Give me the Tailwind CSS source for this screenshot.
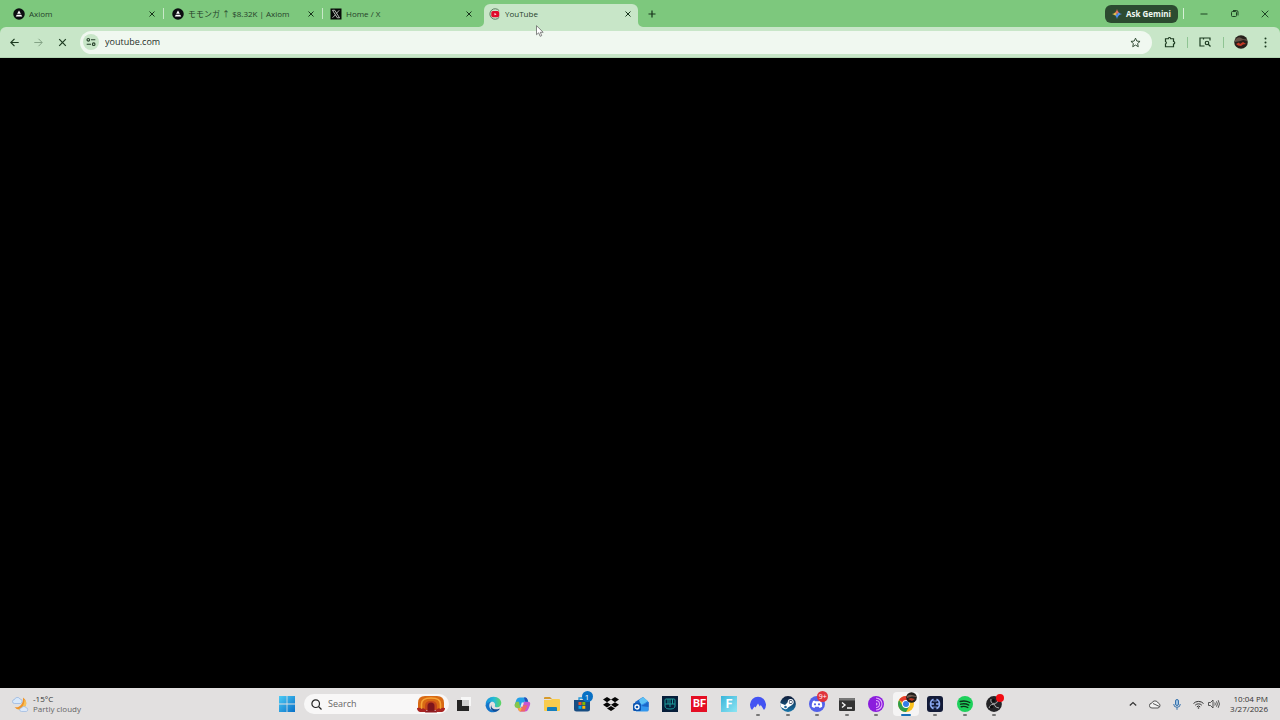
<!DOCTYPE html>
<html lang="en">
<head>
  <meta charset="UTF-8" />
  <meta name="viewport" content="width=device-width, initial-scale=1.0"/>
  <title>YouTube</title>
  <script src="https://cdn.jsdelivr.net/npm/@tailwindcss/browser@4"></script>
</head>
<body class="h-screen flex flex-col overflow-hidden bg-black text-[#26402a] font-['Open_Sans','Noto_Sans_CJK_JP',sans-serif]">

  <!-- Tab strip -->
  <header class="bg-[#7dc87d]">
    <div class="h-[27px] flex items-center">
      <nav class="h-full flex items-center pl-[7px]" aria-label="Tabs">
        <div class="w-[154px] flex items-center gap-1 pl-1.5 pr-[5px]">
          <svg class="size-3 shrink-0" viewBox="0 0 24 24"><circle cx="12" cy="12" r="11.500" fill="#0b0d10"/><path d="M12 5l3.700 6.500H8.300z" fill="#fff"/><path d="M7.500 13.500h9l2 3.500H5.500z" fill="#fff"/></svg>
          <a href="#" class="flex-1 truncate text-[8px] leading-3">Axiom</a>
          <button aria-label="Close tab"><svg class="size-2" viewBox="0 0 8 8" stroke="#17331b" stroke-width="1"><path d="M1.500 1.500l5 5M6.500 1.500l-5 5"/></svg></button>
        </div>
        <div class="w-[5px] flex justify-center"><span class="w-px h-[11px] bg-[#c8e8c8]"></span></div>
        <div class="w-[154px] flex items-center gap-1 pl-1.5 pr-[5px]">
          <svg class="size-3 shrink-0" viewBox="0 0 24 24"><circle cx="12" cy="12" r="11.500" fill="#0b0d10"/><path d="M12 5l3.700 6.500H8.300z" fill="#fff"/><path d="M7.500 13.500h9l2 3.500H5.500z" fill="#fff"/></svg>
          <a href="#" class="flex-1 truncate text-[8px] leading-3">モモンガ ↑ $8.32K | Axiom</a>
          <button aria-label="Close tab"><svg class="size-2" viewBox="0 0 8 8" stroke="#17331b" stroke-width="1"><path d="M1.500 1.500l5 5M6.500 1.500l-5 5"/></svg></button>
        </div>
        <div class="w-[5px] flex justify-center"><span class="w-px h-[11px] bg-[#c8e8c8]"></span></div>
        <div class="w-[154px] flex items-center gap-1 pl-[5px] pr-1.5">
          <svg class="size-3 shrink-0" viewBox="0 0 24 24"><path d="M1 1h22v22H1z" fill="#080a09"/><path d="M5 4.500h4.500L19 19.500h-4.500zM18.500 4.500l-6 6.500M11 13.500l-6 6" fill="none" stroke="#e8ece8" stroke-width="1.500"/></svg>
          <a href="#" class="flex-1 truncate text-[8px] leading-3">Home / X</a>
          <button aria-label="Close tab"><svg class="size-2" viewBox="0 0 8 8" stroke="#17331b" stroke-width="1"><path d="M1.500 1.500l5 5M6.500 1.500l-5 5"/></svg></button>
        </div>
        <div class="w-[5px] h-full flex items-end justify-end"><svg class="size-[5px]" viewBox="0 0 5 5"><path d="M5 0v5H0a5 5 0 0 0 5-5z" fill="#c8e6c8"/></svg></div>
        <div class="w-[154px] h-full pt-1">
          <div class="h-full flex items-center gap-1 pl-[5px] pr-1.5 pb-1 rounded-t-md bg-[#c8e6c8]">
            <svg class="size-3 shrink-0" viewBox="0 0 24 24"><path d="M20.500 5.500A10.500 10.500 0 1 0 20.500 18.500" fill="none" stroke="#4f6e55" stroke-width="1.800"/><rect x="4.500" y="6" width="16" height="12.500" rx="3.500" fill="#e00b2a"/><path d="M11 10l4 2.300-4 2.300z" fill="#fff"/></svg>
            <a href="#" class="flex-1 truncate text-[8px] leading-3">YouTube</a>
            <button aria-label="Close tab"><svg class="size-2" viewBox="0 0 8 8" stroke="#17331b" stroke-width="1"><path d="M1.500 1.500l5 5M6.500 1.500l-5 5"/></svg></button>
          </div>
        </div>
        <div class="w-[5px] h-full flex items-end"><svg class="size-[5px]" viewBox="0 0 5 5"><path d="M0 0v5h5a5 5 0 0 1-5-5z" fill="#c8e6c8"/></svg></div>
        <button class="ml-[5px]" aria-label="New tab"><svg class="size-2" viewBox="0 0 8 8" stroke="#17331b" stroke-width="1.200"><path d="M4 .5v7M.5 4h7"/></svg></button>
      </nav>

      <div class="ml-auto flex items-center pr-[11px]">
        <button class="h-[18px] w-[73px] flex items-center justify-center gap-1 rounded-md bg-[#2c4a30] text-[#f0f8f0] text-[8px] leading-3 font-bold whitespace-nowrap">
          <svg class="size-2.5" viewBox="0 0 20 20">
            <path d="M10 0q1 6 4 7L10 10 6 7q3-1 4-7z" fill="#e8735f"/><path d="M20 10q-6 1-7 4l-3-4 4-3q1 2 6 3z" fill="#5a96f8"/><path d="M10 20q-1-6-4-7l4-3 3 4q-2 1-3 6z" fill="#4a90f0"/><path d="M0 10q5-1 6-3l4 3-4 3q-1-2-6-3z" fill="#e9c04e"/>
          </svg>
          Ask Gemini
        </button>
        <span class="ml-[5px] w-px h-[11px] bg-[#d5f0d5]"></span>
        <div class="ml-4 flex items-center gap-[22px]">
          <button aria-label="Minimize"><svg class="size-2" viewBox="0 0 8 8" stroke="#1f4525" stroke-width="1"><path d="M.5 4h7"/></svg></button>
          <button aria-label="Restore"><svg class="size-[9px]" viewBox="0 0 9 9" fill="none" stroke="#1f4525" stroke-width="1"><rect x="1.500" y="2.500" width="5" height="5" rx="1"/><path d="M3 1.500h3.500a1.500 1.500 0 0 1 1.500 1.500v3.500"/></svg></button>
          <button aria-label="Close window"><svg class="size-2" viewBox="0 0 8 8" stroke="#1f4525" stroke-width="1"><path d="M.7.7l6.600 6.600M7.300.7L.7 7.300"/></svg></button>
        </div>
      </div>
    </div>

    <!-- Toolbar -->
    <div class="h-[31px] flex items-center rounded-t-md bg-[#c8e6c8] border-b border-[#b3d6b3] pl-2.5 pr-[9px]">
      <button aria-label="Back"><svg class="size-[9px]" viewBox="0 0 9 9" fill="none" stroke="#1c3a20" stroke-width="1.200"><path d="M8.700 4.500H1M4.500 .8L.8 4.500l3.700 3.700"/></svg></button>
      <button class="ml-[15px]" aria-label="Forward" disabled><svg class="size-[9px]" viewBox="0 0 9 9" fill="none" stroke="#84a386" stroke-width="1"><path d="M.3 4.500H8M4.500 .8l3.700 3.700-3.700 3.700"/></svg></button>
      <button class="ml-[15px]" aria-label="Stop loading"><svg class="size-[9px]" viewBox="0 0 9 9" stroke="#1c3a20" stroke-width="1.200"><path d="M1.200 1.200l6.600 6.600M7.800 1.200L1.200 7.800"/></svg></button>
      <form class="ml-[13px] flex-1 h-[23px] flex items-center rounded-full bg-[#f0f8f0] pl-[3px] pr-[11px]">
        <button type="button" class="size-4 flex items-center justify-center rounded-full bg-[#c8e6c8]" aria-label="Site information">
          <svg class="size-2.5" viewBox="0 0 10 10" fill="none" stroke="#26402a" stroke-width="1.100"><circle cx="2.300" cy="2.800" r="1.300"/><path d="M5 2.800h4.300M.7 7.200H5"/><circle cx="7.700" cy="7.200" r="1.300"/></svg>
        </button>
        <input type="text" aria-label="Address" value="youtube.com" class="ml-1.5 flex-1 bg-transparent text-[9px] leading-4 text-[#26302a] outline-none"/>
        <button type="button" aria-label="Bookmark this tab"><svg class="size-[11px]" viewBox="0 0 24 24" fill="none" stroke="#26402a" stroke-width="2"><path d="M12 2.500l2.900 6.400 7 .7-5.300 4.700 1.500 6.900L12 17.600l-6.100 3.600 1.500-6.900L2.100 9.600l7-.7z"/></svg></button>
      </form>
      <div class="ml-3 flex items-center">
        <button aria-label="Extensions"><svg class="size-3" viewBox="0 0 24 24" fill="none" stroke="#1c3a20" stroke-width="2.400"><path d="M3 5.500h5.500a2.500 2.500 0 0 1 5 0H19V11a2.500 2.500 0 0 1 0 5v5.500H3v-5.500a2.700 2.700 0 0 0 0-5z"/></svg></button>
        <span class="ml-[11px] w-px h-[11px] bg-[#8fc493]"></span>
        <button class="ml-[11px]" aria-label="Search side panel"><svg class="size-3" viewBox="0 0 24 24" fill="none" stroke="#1c3a20" stroke-width="2.400"><path d="M11 20H2V4h20v5M9 4v3"/><circle cx="16" cy="14" r="3.500"/><path d="M18.500 16.500L23 21"/></svg></button>
        <span class="ml-3 w-px h-[11px] bg-[#8fc493]"></span>
        <button class="ml-2.5" aria-label="Profile">
          <svg class="size-3.5" viewBox="0 0 14 14"><circle cx="7" cy="7" r="6.800" fill="#27201b"/><path d="M1 5q3-4 6-2t5.500 1l.8 2-4-1-3 1L1 7z" fill="#655246"/><path d="M2 9l3-1.500L6 9l3-2 3 2-3 .5-2 1.500-3-.5z" fill="#c43a26"/></svg>
        </button>
        <button class="ml-3" aria-label="Menu"><svg class="size-[11px]" viewBox="0 0 11 11" fill="#1c3a20"><circle cx="5.500" cy="1.500" r="1"/><circle cx="5.500" cy="5.500" r="1"/><circle cx="5.500" cy="9.500" r="1"/></svg></button>
      </div>
    </div>
  </header>

  <!-- Page content, still loading -->
  <main class="flex-1 bg-black"></main>

  <!-- Taskbar -->
  <footer class="h-8 grid grid-cols-[1fr_auto_1fr] items-center bg-[#e2e0e0] text-[#333]">
    <button class="justify-self-start flex items-center gap-1 pl-3 text-left text-[8px] leading-[10px]">
      <svg class="size-[17px]" viewBox="0 0 17 17">
        <path d="M11 1.500a6.500 6.500 0 1 1-8.500 9.500c4 1.500 9-2 8.500-9.500z" fill="#ef952c"/><path d="M12.500 3.500a6 6 0 0 1-7 9.500c4 .5 7-4 7-9.500z" fill="#f8c35b"/>
        <path d="M2.500 7.500a2 2 0 0 1 0-4 3 3 0 0 1 5.500-.5 2.300 2.300 0 0 1 .5 4.500z" fill="#d8e8fa" stroke="#8fb2e0" stroke-width=".7"/>
        <path d="M9.500 15.500a1.800 1.800 0 0 1 0-3.600 2.700 2.700 0 0 1 4.500-.3 2 2 0 0 1 .3 3.900z" fill="#dce9fa" stroke="#98b6e0" stroke-width=".7"/>
      </svg>
      <span><span class="block">-15°C</span><span class="block text-[#666]">Partly cloudy</span></span>
    </button>

    <div class="h-full flex items-center">
      <button class="w-8 flex justify-center" aria-label="Start">
        <svg class="size-4" viewBox="0 0 16 16"><defs><linearGradient id="win" x2="1" y2="1"><stop stop-color="#4ccbf5"/><stop offset="1" stop-color="#0870c8"/></linearGradient></defs><path d="M0 0h7.600v7.600H0zM8.400 0H16v7.600H8.400zM0 8.400h7.600V16H0zM8.400 8.400H16V16H8.400z" fill="url(#win)"/></svg>
      </button>
      <label class="ml-px w-[145px] h-5 flex items-center rounded-full bg-[#f8f7f7] pl-[7px] pr-1">
        <svg class="size-[11px] shrink-0" viewBox="0 0 11 11" fill="none" stroke="#222" stroke-width="1.200"><circle cx="4.700" cy="4.700" r="3.800"/><path d="M7.500 7.500l3 3"/></svg>
        <input type="search" aria-label="Search" placeholder="Search" class="ml-1.5 flex-1 min-w-0 bg-transparent text-[9px] leading-4 placeholder:text-[#666] outline-none"/>
        <svg class="w-7 h-[18px] shrink-0" viewBox="0 0 28 18">
          <path d="M1 15V8q0-7 7-7h12q7 0 7 7v7z" fill="#d96a14"/><path d="M4.500 14V9q0-6 9.500-6t9.500 6v5" fill="none" stroke="#f6a437" stroke-width="1.600"/><path d="M8 15v-4q0-5 6-5t6 5v4z" fill="#c4461a"/><path d="M10.500 16v-5q0-3.500 3.500-3.500t3.500 3.500v5z" fill="#7d151c"/><path d="M0 13q3-1 4.500 1 2-2 4.500 1v2H3q-3-1-3-4zM28 13q-3-1-4.500 1-2-2-4.500 1v2h6q3-1 3-4z" fill="#a92523"/><path d="M9 15.500h10l1 2H8z" fill="#8e1a20"/>
        </svg>
      </label>

      <div class="w-[560px] h-full flex">
        <button class="flex-1 flex items-center justify-center" aria-label="Task view"><svg class="size-4" viewBox="0 0 16 16"><path d="M5 1h10v9H5z" fill="#f7f7f7"/><path d="M1 4h5v6h7v5H1z" fill="#252525"/><path d="M6 4h7v6H6z" fill="#cfcfcf"/></svg></button>
        <button class="flex-1 flex items-center justify-center" aria-label="Edge">
          <svg class="size-[17px]" viewBox="0 0 24 24"><defs><linearGradient id="edge" x2="1" y2="0"><stop stop-color="#1690dc"/><stop offset=".55" stop-color="#28bdd4"/><stop offset="1" stop-color="#62d65b"/></linearGradient></defs><path d="M1 12C1 5 6 1 12 1c7 0 11 4.500 11 9 0 4-3 6-6 6-2.500 0-3.500-1-3-2.500C15 11 13 8 9.500 8 5 8 2 11 1 15z" fill="url(#edge)"/><path d="M1 13c1-3 4-5 8-5-2 1-3 3-3 5.500C6 19 11 22 17 21c-2 1.500-4 2-6 2C5 23 1 18 1 13z" fill="#1474c9"/><path d="M9 12c-1 5 4 9 12 5.500-1 2.500-3 4-6 4.500-5 0-8.500-3.500-6-10z" fill="#124c96"/></svg>
        </button>
        <button class="flex-1 flex items-center justify-center" aria-label="Copilot">
          <svg class="size-[17px]" viewBox="0 0 24 24"><path d="M8 2h8q2 0 3 3l1 3h-5l-4 8H4q-4 0-2.500-5l2-6Q5 2 8 2z" fill="#23a0e8"/><path d="M7 8H3l-2 4q-.5 5 4 5h4z" fill="#87c64a"/><path d="M16 22H9q-2 0-3-3l-1-2h5l4-9h6q4 0 2.500 5l-2 5Q19 22 16 22z" fill="#c956cf"/><path d="M10 17l2-4h7l-4 9H9q-2 0-3-3l-1-2z" fill="#ef6a62"/><path d="M6 17h5l-2 5q-2 0-3-3z" fill="#f5b03e"/><path d="M14 2h2q2 0 3 3l1 3h-4z" fill="#284fb8"/><path d="M11 9h3l-2 6H9z" fill="#e9e7e7"/></svg>
        </button>
        <button class="flex-1 flex items-center justify-center" aria-label="File Explorer"><svg class="size-4" viewBox="0 0 16 16"><path d="M0 2q0-1 1-1h5l2 2H0z" fill="#d79a2b"/><path d="M0 4h6l2-1h7q1 0 1 1v10q0 1-1 1H1q-1 0-1-1z" fill="#f9cc4d"/><path d="M3 12q0-1 1-1h8q1 0 1 1v3H3z" fill="#167fbd"/></svg></button>
        <button class="flex-1 flex items-center justify-center" aria-label="Microsoft Store">
          <span class="relative">
            <svg class="size-4" viewBox="0 0 16 16"><path d="M5 4V2h6v2" fill="none" stroke="#2196d8" stroke-width="1.300"/><path d="M0 4h16v9q0 2.500-2.500 2.500h-11Q0 15.500 0 13z" fill="#184d82"/><path d="M4.500 6h3v3h-3z" fill="#f25022"/><path d="M8.300 6h3v3h-3z" fill="#7fba00"/><path d="M4.500 9.800h3v3h-3z" fill="#00a4ef"/><path d="M8.300 9.800h3v3h-3z" fill="#ffb900"/></svg>
            <span class="absolute -top-[5px] -right-[3px] size-[11px] rounded-full bg-[#0870c4] text-white text-[8px] leading-[11px] text-center">1</span>
          </span>
        </button>
        <button class="flex-1 flex items-center justify-center" aria-label="Dropbox"><svg class="size-4" viewBox="0 0 16 16"><path d="M4 1l4 2.600-4 2.600L0 3.600zM12 1l4 2.600-4 2.600-4-2.600zM4 6.200l4 2.600-4 2.600-4-2.600zM12 6.200l4 2.600-4 2.600-4-2.600zM8 10l4 2.500-4 2.500-4-2.500z" fill="#050505"/></svg></button>
        <button class="flex-1 flex items-center justify-center" aria-label="Outlook"><svg class="size-4" viewBox="0 0 16 16"><path d="M2 6l8-5 5.500 5v8q0 1-1.500 1H3z" fill="#1b67c9"/><path d="M6 4l4-3 5 4-7 5z" fill="#5cc1f5"/><path d="M3 10l12.500-4v8q0 1.500-1.500 1.500H3z" fill="#3297ee"/><path d="M8 10l7.500-4v5z" fill="#1b67c9"/><rect y="7" width="8" height="8" rx="1.500" fill="#0c55b0"/><circle cx="4" cy="11" r="2" fill="none" stroke="#fff" stroke-width="1.300"/></svg></button>
        <button class="flex-1 flex items-center justify-center" aria-label="Launcher"><svg class="size-4" viewBox="0 0 16 16"><path d="M0 0h16v16H0z" fill="#071e3a"/><path d="M3 4q0-1 1-1h8q1 0 1 1v6q0 3-5 3t-5-3zM6 3v5M8 3v5M10.500 3v5M3 8h10M8 8v3" fill="none" stroke="#1c9a9b" stroke-width="1"/></svg></button>
        <button class="flex-1 flex items-center justify-center" aria-label="Battlefield"><span class="size-4 bg-[#e50e24] text-white text-[11px] leading-4 font-bold text-center font-['Roboto',sans-serif]">BF</span></button>
        <button class="flex-1 flex items-center justify-center" aria-label="Fortnite"><span class="size-4 bg-linear-to-br from-[#36b5da] to-[#8be5f3] text-white text-[12px] leading-4 font-bold text-center font-['Roboto',sans-serif]">F</span></button>
        <button class="relative flex-1 flex items-center justify-center" aria-label="NordVPN"><svg class="size-4" viewBox="0 0 16 16"><path d="M2 14A8 8 0 1 1 14 14l-3.200-5-1 1.500L8 7.500l-2.500 4-1-1z" fill="#4353f2"/></svg><span class="absolute bottom-1 w-1 h-0.5 rounded-full bg-[#777]"></span></button>
        <button class="relative flex-1 flex items-center justify-center" aria-label="Steam"><svg class="size-4" viewBox="0 0 16 16"><defs><linearGradient id="steam" x2="0" y2="1"><stop stop-color="#101c38"/><stop offset="1" stop-color="#1776ac"/></linearGradient></defs><circle cx="8" cy="8" r="7.900" fill="url(#steam)"/><path d="M0 7l5 2 3-3 4 3-4 2.500Q7 14 4.500 13L.8 11z" fill="#fff"/><circle cx="10.700" cy="6" r="3" fill="#fff"/><circle cx="10.700" cy="6" r="1.900" fill="#172b4b"/><circle cx="10.700" cy="6" r="1.300" fill="#fff"/><circle cx="5.500" cy="11" r="1.300" fill="#236a9b"/></svg><span class="absolute bottom-1 w-1 h-0.5 rounded-full bg-[#777]"></span></button>
        <button class="relative flex-1 flex items-center justify-center" aria-label="Discord">
          <span class="relative">
            <svg class="size-4" viewBox="0 0 16 16"><circle cx="8" cy="8" r="8" fill="#5260ea"/><path d="M5.500 4.500L4 5q-1.600 3-1.200 5.700 1.300 1 2.700 1.200l.6-1.100h3.800l.6 1.100q1.400-.2 2.700-1.200Q13.600 8 12 5l-1.500-.5-.5.800H6z" fill="#fff"/><circle cx="6" cy="8.300" r="1.100" fill="#5260ea"/><circle cx="10" cy="8.300" r="1.100" fill="#5260ea"/></svg>
            <span class="absolute -top-[5px] -right-[3px] size-[11px] rounded-full bg-[#e0343d] text-white text-[7px] leading-[11px] text-center">9+</span>
          </span>
          <span class="absolute bottom-1 w-1 h-0.5 rounded-full bg-[#777]"></span>
        </button>
        <button class="relative flex-1 flex items-center justify-center" aria-label="Terminal"><svg class="w-4 h-[13px]" viewBox="0 0 16 13"><rect width="16" height="13" rx="1" fill="#333"/><path d="M0 1q0-1 1-1h14q1 0 1 1v1.500H0z" fill="#777"/><path d="M3 4.500L6 7 3 9.500M8 10h5" fill="none" stroke="#f5f5f5" stroke-width="1.400"/></svg><span class="absolute bottom-1 w-1 h-0.5 rounded-full bg-[#777]"></span></button>
        <button class="relative flex-1 flex items-center justify-center" aria-label="Tor Browser"><svg class="size-4" viewBox="0 0 16 16"><circle cx="8" cy="8" r="8" fill="#8b1ddd"/><path d="M8 2a6 6 0 0 1 0 12M8 4.500a3.500 3.500 0 0 1 0 7M8 7a1 1 0 0 1 0 2" fill="none" stroke="#e1a8fa" stroke-width="1.100"/></svg><span class="absolute bottom-1 w-1 h-0.5 rounded-full bg-[#777]"></span></button>
        <button class="relative flex-1 flex items-center justify-center" aria-label="Chrome">
          <span class="relative w-[26px] h-6 flex items-center justify-center rounded-sm bg-[#f5f4f4]">
            <svg class="size-4" viewBox="0 0 16 16"><circle cx="8" cy="8" r="8" fill="#fbc11d"/><path d="M8 8L1.100 4A8 8 0 0 1 14.900 4H8z" fill="#e53c2f"/><path d="M1.100 4l3.500 6L8 12v4A8 8 0 0 1 1.100 4z" fill="#2c9d4b"/><path d="M8 16l3.500-6L8 11.500 4.600 10z" fill="#2c9d4b"/><circle cx="8" cy="8" r="3.900" fill="#fff"/><circle cx="8" cy="8" r="3" fill="#347de8"/></svg>
            <svg class="absolute top-0 right-0.5 size-[11px]" viewBox="0 0 11 11"><circle cx="5.500" cy="5.500" r="5.300" fill="#211e1b"/><path d="M1 4q3-2 5-1l4 1v1L6 4.500 1 6z" fill="#6d5b50"/><path d="M2 7l3-1 4 1-3 2z" fill="#b93622"/></svg>
          </span>
          <span class="absolute bottom-1 w-2.5 h-0.5 rounded-full bg-[#1670b8]"></span>
        </button>
        <button class="relative flex-1 flex items-center justify-center" aria-label="Exchange"><svg class="size-4" viewBox="0 0 16 16"><rect width="16" height="16" rx="3" fill="#131b38"/><path d="M6.500 3.200a5 5 0 0 0-3 4.800 5 5 0 0 0 3 4.800M9.500 3.200A5 5 0 0 1 12.500 8a5 5 0 0 1-3 4.800M3.500 8H7M9 8h3.500M6.500 5h1M8.500 5h1M6.500 11h1M8.500 11h1" fill="none" stroke="#8aa8f0" stroke-width="1.500"/></svg><span class="absolute bottom-1 w-1 h-0.5 rounded-full bg-[#777]"></span></button>
        <button class="relative flex-1 flex items-center justify-center" aria-label="Spotify"><svg class="size-4" viewBox="0 0 16 16"><circle cx="8" cy="8" r="8" fill="#1ed05b"/><path d="M3.200 5.500q5-1.500 9.600 1M3.700 8.200q4.300-1.200 8 .9M4.200 10.700q3.500-.9 6.600.8" fill="none" stroke="#0c3018" stroke-width="1.400" stroke-linecap="round"/></svg><span class="absolute bottom-1 w-1 h-0.5 rounded-full bg-[#777]"></span></button>
        <button class="relative flex-1 flex items-center justify-center" aria-label="OBS Studio">
          <span class="relative">
            <svg class="size-4" viewBox="0 0 16 16"><circle cx="8" cy="8" r="7.900" fill="#242326"/><path d="M5 3q-1 4 3 5 4-1 4-4M8 8q-4 0-5 4M8 8q1 4 5 4" fill="none" stroke="#b5b5b7" stroke-width=".9"/><circle cx="7.500" cy="4.500" r="1.500" fill="#0c0c0d"/><circle cx="5.500" cy="10.800" r="1.500" fill="#0c0c0d"/></svg>
            <span class="absolute -top-[2px] -right-[2px] size-2 rounded-full bg-[#f30c13]"></span>
          </span>
          <span class="absolute bottom-1 w-1 h-0.5 rounded-full bg-[#777]"></span>
        </button>
      </div>
    </div>

    <div class="justify-self-end flex items-center pr-3">
      <button aria-label="Show hidden icons"><svg class="size-2" viewBox="0 0 8 8" fill="none" stroke="#333" stroke-width="1.200"><path d="M.8 5.500L4 2.500l3.200 3"/></svg></button>
      <button class="ml-3" aria-label="OneDrive"><svg class="w-3 h-[9px]" viewBox="0 0 12 9" fill="#f2f2f2" stroke="#555" stroke-width="1"><path d="M3 8a2.400 2.400 0 0 1-.3-4.800A3.500 3.500 0 0 1 9.200 3 2.600 2.600 0 0 1 9 8z"/><path d="M4 3.500l6.500 3" fill="none"/></svg></button>
      <button class="ml-3" aria-label="Microphone in use"><svg class="w-2 h-[11px]" viewBox="0 0 8 11" fill="none" stroke="#3772ad" stroke-width="1"><rect x="2.500" y=".5" width="3" height="6" rx="1.500" fill="#9cc1e3"/><path d="M.7 5a3.300 3.300 0 0 0 6.600 0M4 8.300v2.500"/></svg></button>
      <button class="ml-3 flex items-center gap-1" aria-label="Network and volume">
        <svg class="w-[11px] h-[9px]" viewBox="0 0 11 9" fill="none" stroke="#333" stroke-width="1"><path d="M.5 3.500a7 7 0 0 1 10 0M2.200 5.200a4.700 4.700 0 0 1 6.600 0M3.800 6.800a2.500 2.500 0 0 1 3.400 0"/><circle cx="5.500" cy="8" r=".8" fill="#333" stroke="none"/></svg>
        <svg class="w-3 h-2.5" viewBox="0 0 12 10" fill="none" stroke="#444" stroke-width=".9"><path d="M.5 3.500h2L5 1v8L2.500 6.500h-2zM6.800 3.500q1 1.500 0 3M8.500 2.300q1.800 2.700 0 5.400M10.200 1.200q2.500 3.800 0 7.600"/></svg>
      </button>
      <button class="ml-2.5 text-right text-[8px] leading-[10px]"><time class="block">10:04 PM</time><time class="block">3/27/2026</time></button>
    </div>
  </footer>

  <!-- Mouse pointer -->
  <svg class="absolute left-[536px] top-[25px] w-2 h-3 pointer-events-none" viewBox="0 0 8 12"><path d="M.5.700v9l2.200-1.900 1.400 3.500 1.600-.7-1.400-3.300h2.900z" fill="#fff" stroke="#555" stroke-width=".7"/></svg>

</body>
</html>
